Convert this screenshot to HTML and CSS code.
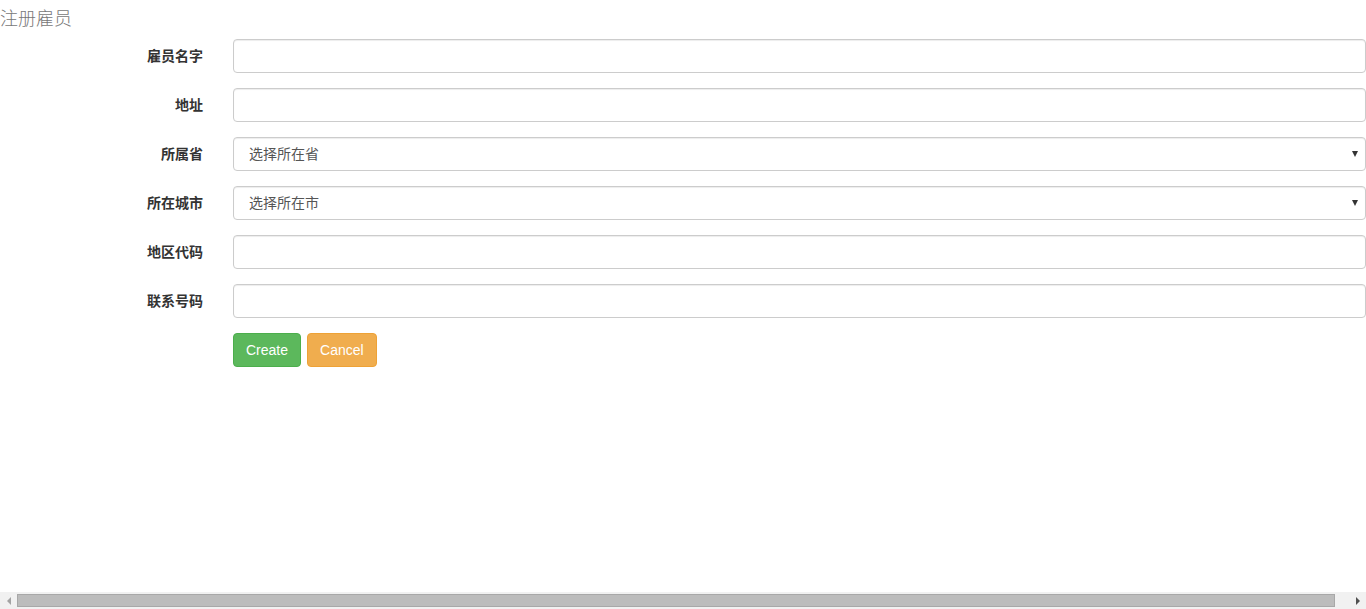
FILE: index.html
```html
<!DOCTYPE html>
<html lang="zh-CN">
<head>
    <meta charset="UTF-8">
    <meta name="viewport" content="width=device-width, initial-scale=1.0">
    <title>注册雇员</title>
    <link rel="stylesheet" href="styles.css">
</head>
<body>
    <div class="page">
        <div class="title">注册雇员</div>
        <form class="form-horizontal">
            <div class="form-group">
                <label class="control-label">雇员名字</label>
                <input class="form-control" type="text">
            </div>
            <div class="form-group">
                <label class="control-label">地址</label>
                <input class="form-control" type="text">
            </div>
            <div class="form-group">
                <label class="control-label">所属省</label>
                <div class="select-wrap">
                    <select class="form-control">
                        <option>选择所在省</option>
                    </select>
                </div>
            </div>
            <div class="form-group">
                <label class="control-label">所在城市</label>
                <div class="select-wrap">
                    <select class="form-control">
                        <option>选择所在市</option>
                    </select>
                </div>
            </div>
            <div class="form-group">
                <label class="control-label">地区代码</label>
                <input class="form-control" type="text">
            </div>
            <div class="form-group">
                <label class="control-label">联系号码</label>
                <input class="form-control" type="text">
            </div>
            <div class="form-group">
                <span></span>
                <div class="actions">
                    <button type="button" class="btn btn-success">Create</button>
                    <button type="button" class="btn btn-warning">Cancel</button>
                </div>
            </div>
        </form>
    </div>
    <!-- horizontal scrollbar, page is a bit wider than the window -->
    <div class="hscroll">
        <span class="arrow arrow-left"></span>
        <div class="thumb"></div>
        <span class="arrow arrow-right"></span>
    </div>
</body>
</html>
```

FILE: styles.css
```css
* {
    box-sizing: border-box;
}
html, body {
    margin: 0;
    padding: 0;
}
body {
    font-family: "Liberation Sans", "Noto Sans CJK SC", sans-serif;
    font-size: 14px;
    color: #333;
    background: #fff;
}
.page {
    width: 1366px;
}
.title {
    height: 30px;
    padding-top: 8px;
    line-height: 22px;
    margin-bottom: 9px;
    font-family: "Liberation Serif", "Noto Sans CJK SC", serif;
    font-size: 18px;
    font-weight: 300;
    color: #777;
}
.form-group {
    display: grid;
    grid-template-columns: 203px 1fr;
    column-gap: 30px;
    margin-bottom: 15px;
}
.control-label {
    text-align: right;
    font-weight: 700;
    line-height: 20px;
    padding-top: 7px;
}
.form-control {
    display: block;
    width: 100%;
    height: 34px;
    padding: 6px 12px;
    font-family: inherit;
    font-size: 14px;
    line-height: 20px;
    color: #555;
    background: #fff;
    border: 1px solid #ccc;
    border-radius: 4px;
    box-shadow: inset 0 1px 1px rgba(0, 0, 0, 0.075);
    outline: none;
}
select.form-control {
    appearance: none;
    -webkit-appearance: none;
    padding-left: 15px;
}
.select-wrap {
    position: relative;
}
.select-wrap::after {
    content: "";
    position: absolute;
    right: 8px;
    top: 14px;
    border-left: 3.5px solid transparent;
    border-right: 3.5px solid transparent;
    border-top: 6px solid #333;
    pointer-events: none;
}
.actions {
    display: flex;
    gap: 6px;
}
.btn {
    height: 34px;
    padding: 6px 12px;
    font-family: "Liberation Sans", sans-serif;
    font-size: 14px;
    line-height: 20px;
    color: #fff;
    border: 1px solid transparent;
    border-radius: 4px;
    cursor: pointer;
}
.btn-success {
    background: #5cb85c;
    border-color: #4cae4c;
}
.btn-warning {
    background: #f0ad4e;
    border-color: #eea236;
}
.hscroll {
    position: fixed;
    left: 0;
    right: 0;
    bottom: 0;
    height: 17px;
    background: #f1f1f1;
    display: flex;
    align-items: center;
}
.arrow {
    width: 17px;
    height: 17px;
    display: flex;
    align-items: center;
    justify-content: center;
}
.arrow::before {
    content: "";
    border-top: 4px solid transparent;
    border-bottom: 4px solid transparent;
}
.arrow-left::before {
    border-right: 4px solid #a3a3a3;
}
.arrow-right::before {
    border-left: 4px solid #505050;
}
.thumb {
    height: 13px;
    width: 1318px;
    background: #bcbcbc;
    border: 1px solid #a8a8a8;
}
.arrow-right {
    margin-left: auto;
}
```
